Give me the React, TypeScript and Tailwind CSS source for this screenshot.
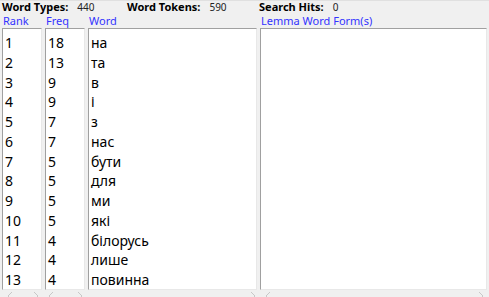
import React from 'react'

type Row = {
  rank: number
  freq: number
  word: string
}

const rows: Row[] = [
  { rank: 1, freq: 18, word: 'на' },
  { rank: 2, freq: 13, word: 'та' },
  { rank: 3, freq: 9, word: 'в' },
  { rank: 4, freq: 9, word: 'і' },
  { rank: 5, freq: 7, word: 'з' },
  { rank: 6, freq: 7, word: 'нас' },
  { rank: 7, freq: 5, word: 'бути' },
  { rank: 8, freq: 5, word: 'для' },
  { rank: 9, freq: 5, word: 'ми' },
  { rank: 10, freq: 5, word: 'які' },
  { rank: 11, freq: 4, word: 'білорусь' },
  { rank: 12, freq: 4, word: 'лише' },
  { rank: 13, freq: 4, word: 'повинна' }
]

const panel =
  'bg-white border border-t-[#a0a0a0] border-l-[#a0a0a0] border-r-[#e8e8e8] border-b-[#e8e8e8] overflow-hidden pt-[4px] pl-[2px]'

function Stat({ label, value, w }: { label: string; value: string; w: string }) {
  return (
    <div className={`flex items-center ${w}`}>
      <span className="font-bold text-[11px] text-black">{label}</span>
      <span className="ml-[9px] text-[10px] text-[#222]">{value}</span>
    </div>
  )
}

function Chevron({ dir }: { dir: 'l' | 'r' }) {
  return (
    <svg width="6" height="7" viewBox="0 0 6 7" className="block">
      <path
        d={dir === 'l' ? 'M5 1 L1 5 L5 9' : 'M1 1 L5 5 L1 9'}
        fill="none"
        stroke="#c8c8c8"
        strokeWidth="1"
      />
    </svg>
  )
}

export default function App() {
  return (
    <div
      className="w-[489px] h-[297px] bg-[#f0f0f0] flex flex-col overflow-hidden"
      style={{ fontFamily: '"Noto Sans", "Open Sans", sans-serif' }}
    >
      <div className="h-[14px] flex items-center pl-[2px] border-t border-t-[#e0e0e0]">
        <Stat label="Word Types:" value="440" w="w-[125px]" />
        <Stat label="Word Tokens:" value="590" w="w-[132px]" />
        <Stat label="Search Hits:" value="0" w="w-[100px]" />
      </div>

      <div className="h-[14px] flex text-[11px] text-[#3333ff] leading-[14px] pl-[3px]">
        <div className="w-[43px]">Rank</div>
        <div className="w-[43px]">Freq</div>
        <div className="w-[172px]">Word</div>
        <div>Lemma Word Form(s)</div>
      </div>

      <div className="flex-1 flex pl-[2px] gap-[3px] min-h-0">
        <div className={`w-[40px] ${panel}`}>
          {rows.map(r => (
            <div key={r.rank} className="h-[19.75px] text-[14px] leading-[19.75px] text-black">
              {r.rank}
            </div>
          ))}
        </div>
        <div className={`w-[40px] ${panel}`}>
          {rows.map(r => (
            <div key={r.rank} className="h-[19.75px] text-[14px] leading-[19.75px] text-black">
              {r.freq}
            </div>
          ))}
        </div>
        <div className={`w-[169px] ${panel}`}>
          {rows.map(r => (
            <div key={r.rank} className="h-[19.75px] text-[14px] leading-[19.75px] text-black">
              {r.word}
            </div>
          ))}
        </div>
        <div className={`w-[227px] ${panel}`} />
      </div>

      <div className="h-[7px] flex items-start overflow-hidden pt-[1px]">
        <div className="ml-[7px]"><Chevron dir="l" /></div>
        <div className="ml-[20px]"><Chevron dir="r" /></div>
        <div className="ml-[9px]"><Chevron dir="l" /></div>
        <div className="ml-[23px]"><Chevron dir="r" /></div>
        <div className="ml-[167px]"><Chevron dir="r" /></div>
        <div className="ml-[9px]"><Chevron dir="l" /></div>
        <div className="ml-[207px]"><Chevron dir="r" /></div>
      </div>
    </div>
  )
}
